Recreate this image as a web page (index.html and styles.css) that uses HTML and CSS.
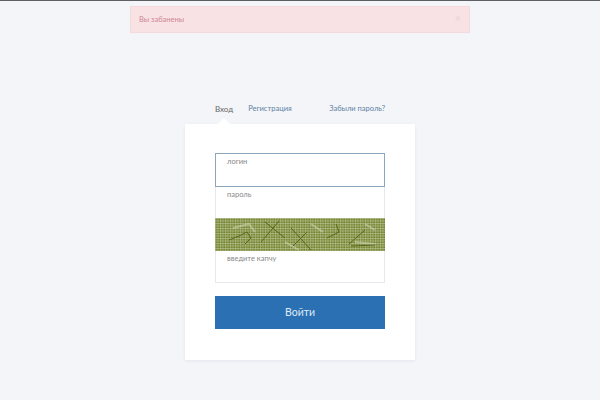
FILE: index.html
```html
<!DOCTYPE html>
<html lang="ru">
<head>
<meta charset="utf-8">
<title>Вход</title>
<link rel="stylesheet" href="styles.css">
</head>
<body>
<div class="topline"></div>
<div class="alert"><span>Вы забанены</span><span class="close">×</span></div>
<main class="login">
  <nav class="tabs">
    <a class="tab active">Вход</a>
    <a class="tab">Регистрация</a>
    <a class="tab forgot">Забыли пароль?</a>
  </nav>
  <form class="card">
    <div class="fields">
      <div class="field focus">логин</div>
      <div class="field pass">пароль</div>
      <svg class="captcha" viewBox="0 0 170 33" preserveAspectRatio="none" aria-hidden="true">
        <defs>
          <pattern id="grid" width="2.5" height="2.5" patternUnits="userSpaceOnUse">
            <rect width="2.5" height="2.5" fill="#6f7f28"/>
            <rect width="1" height="2.5" fill="#b4be8c" opacity=".65"/>
            <rect width="2.5" height="1" fill="#c0c99e" opacity=".65"/>
          </pattern>
        </defs>
        <rect width="170" height="33" fill="url(#grid)"/>
        <g fill="none" stroke="#dfe3c9" stroke-width="2" opacity=".45">
          <path d="M18 10 L34 6 L40 14 M70 24 L84 32 M96 6 L108 14 M140 24 L160 26 M150 6 L160 12"/>
        </g>
        <g fill="none" stroke="#57671a" stroke-width="1">
          <path d="M14 22 L24 18 L32 14 L36 20 L30 26"/>
          <path d="M46 24 L64 3 M50 4 L70 20"/>
          <path d="M76 10 L96 32 M78 28 L92 14"/>
          <path d="M112 20 L124 14 L121 6"/>
          <path d="M134 26 L150 12 M136 28 L160 27"/>
        </g>
      </svg>
      <div class="field code">введите капчу</div>
    </div>
    <button class="submit" type="button">Войти</button>
  </form>
</main>
</body>
</html>
```
FILE: styles.css
```css
* { box-sizing: border-box; }
html, body { margin: 0; height: 400px; overflow: hidden; }
body {
  background: #f3f5f9;
  font-family: "Lato", "Liberation Sans", sans-serif;
  font-size: 7.5px;
  color: #777;
}
.topline { height: 1px; background: #5c5e63; }
.alert {
  width: 340px;
  height: 27px;
  margin: 5px auto 0;
  padding: 0 8px 1px;
  display: flex;
  align-items: center;
  justify-content: space-between;
  background: #f9e2e4;
  border: 1px solid #f5dadd;
  color: #cf8593;
}
.close { font-size: 11px; color: #ebd2d5; margin: -4px 0 0; }
.login { width: 230px; margin: 68px auto 0; }
.tabs {
  display: flex;
  align-items: stretch;
  gap: 15px;
  height: 23px;
  padding: 3px 30px 0;
  line-height: 10px;
  color: #5f81a3;
}
.tab { position: relative; }
.tab.active { color: #666; font-size: 8px; }
.tab.active::after {
  content: "";
  position: absolute;
  left: 50%;
  bottom: 0;
  margin-left: -6px;
  border: 6px solid transparent;
  border-top: 0;
  border-bottom-color: #fff;
}
.forgot { margin-left: auto; }
.card {
  height: 236px;
  padding: 29px 30px 0;
  background: #fff;
  box-shadow: 0 1px 3px rgba(60, 70, 100, .08);
}
.fields {
  display: flex;
  flex-direction: column;
  border: 1px solid #e6e8ee;
  height: 130px;
}
.field { padding: 2px 11px 0; line-height: 12px; color: #888; }
.focus { height: 34px; margin: -1px -1px 0; border: 1px solid #8ca6bd; }
.pass { height: 31px; }
.captcha { display: block; width: 170px; height: 33px; margin: 0 -1px; flex: none; }
.code { flex: 1; }
.submit {
  display: block;
  width: 170px;
  height: 33px;
  margin-top: 13px;
  padding: 0 0 1px;
  border: 0;
  background: #2b70b2;
  color: #dfeaf5;
  font: 10.5px "Lato", "Liberation Sans", sans-serif;
}
```
